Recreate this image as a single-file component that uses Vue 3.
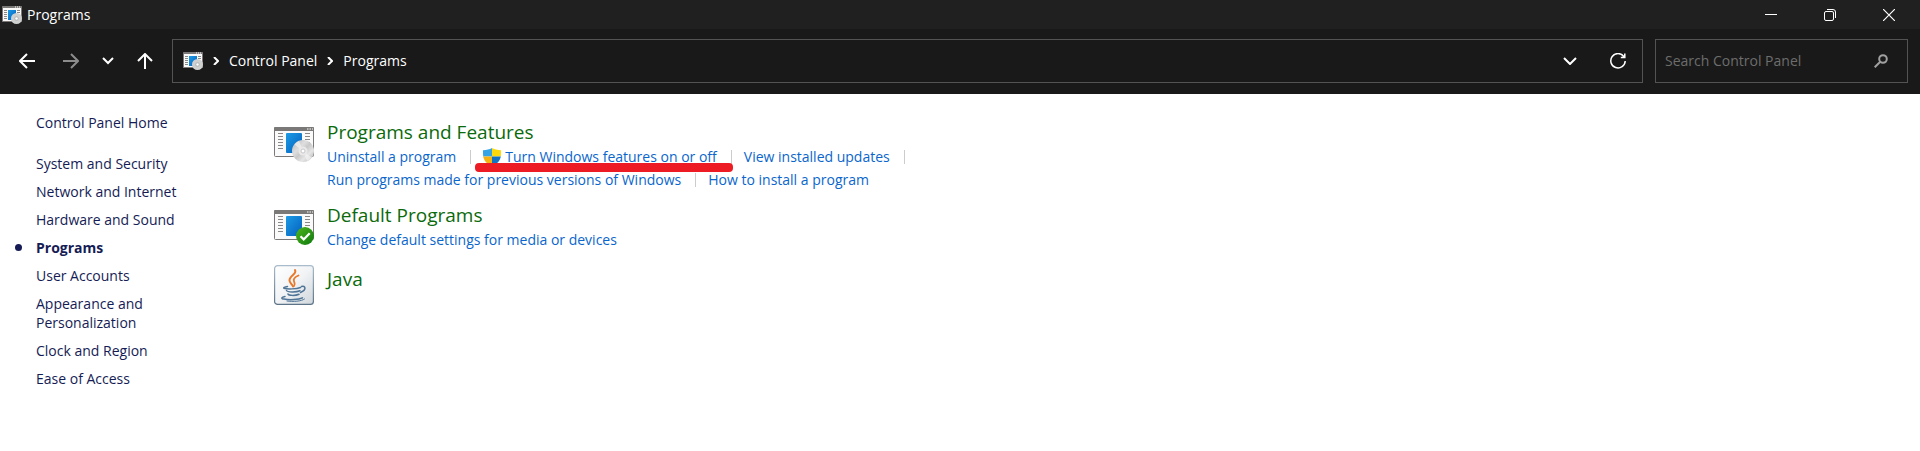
<script setup>
import { ref } from 'vue'

const search = ref('')

const categories = [
  'System and Security',
  'Network and Internet',
  'Hardware and Sound',
  'Programs',
  'User Accounts',
  'Appearance and Personalization',
  'Clock and Region',
  'Ease of Access'
]
const current = 'Programs'

const sections = [
  {
    title: 'Programs and Features',
    icon: 'icon-features',
    rows: [
      [
        { text: 'Uninstall a program', divider: true },
        { text: 'Turn Windows features on or off', shield: true, marked: true, divider: true },
        { text: 'View installed updates', divider: true }
      ],
      [
        { text: 'Run programs made for previous versions of Windows', divider: true },
        { text: 'How to install a program' }
      ]
    ]
  },
  {
    title: 'Default Programs',
    icon: 'icon-defaults',
    rows: [[{ text: 'Change default settings for media or devices' }]]
  },
  { title: 'Java', icon: 'icon-java', rows: [] }
]
</script>

<template>
  <div class="window">
    <svg class="sprite" aria-hidden="true">
      <defs>
        <linearGradient id="blue" x1="0" y1="0" x2="1" y2="1">
          <stop offset="0" stop-color="#1b9be6" />
          <stop offset="1" stop-color="#0560bd" />
        </linearGradient>
        <linearGradient id="disc" x1="0" y1="0" x2="1" y2="1">
          <stop offset="0" stop-color="#b9b9b9" />
          <stop offset="0.35" stop-color="#dedede" />
          <stop offset="0.5" stop-color="#c9c9c9" />
          <stop offset="0.7" stop-color="#e6e6e6" />
          <stop offset="1" stop-color="#a9a9a9" />
        </linearGradient>
        <linearGradient id="green" x1="0" y1="0" x2="1" y2="1">
          <stop offset="0" stop-color="#4fb51c" />
          <stop offset="1" stop-color="#0d7a0d" />
        </linearGradient>
        <linearGradient id="tile" x1="0" y1="0" x2="1" y2="1">
          <stop offset="0" stop-color="#ffffff" />
          <stop offset="0.5" stop-color="#f1f3f5" />
          <stop offset="1" stop-color="#cfd6db" />
        </linearGradient>
        <linearGradient id="tile-edge" x1="0" y1="0" x2="0" y2="1">
          <stop offset="0" stop-color="#a9bccb" />
          <stop offset="1" stop-color="#5d7488" />
        </linearGradient>
        <symbol id="page" viewBox="0 0 40 36">
          <rect x="0.5" y="0.5" width="39" height="29" rx="1" fill="#fafafa" stroke="#7b7977" />
          <path d="M0 1q0-1 1-1h38q1 0 1 1v3H0z" fill="#7b7977" />
          <path d="M33 2h1.500M35.500 2h1.500M38 2h1" stroke="#fff" stroke-width="1.200" />
          <path d="M4 6.500h5M4 9.500h5M4 12.500h5M4 15.500h5M4 18.500h5M4 21.500h5M31 6.500h5M31 9.500h5M31 12.500h5M31 15.500h5" stroke="#8a8886" />
          <rect x="12" y="6" width="16" height="20" rx="1" fill="url(#blue)" />
        </symbol>
        <symbol id="icon-features" viewBox="0 0 40 36">
          <use href="#page" width="40" height="36" />
          <circle cx="29" cy="24" r="11" fill="url(#disc)" />
          <path d="M29 24 20.500 17.500A11 11 0 0 1 25 14z" fill="#f2f2f2" opacity="0.700" />
          <path d="M29 24 37.500 30.500A11 11 0 0 1 33 34z" fill="#f4f4f4" opacity="0.700" />
          <circle cx="29" cy="24" r="4.500" fill="#e9e9e9" />
          <circle cx="29" cy="24" r="2" fill="#fff" stroke="#bdbdbd" stroke-width="0.800" />
        </symbol>
        <symbol id="icon-features-small" viewBox="0 0 20 18">
          <rect width="20" height="16" rx="0.500" fill="#7b7977" />
          <rect x="1" y="2" width="18" height="13" fill="#fafafa" />
          <path d="M13 1h1M15 1h1M17 1h1" stroke="#fff" />
          <path d="M2 4.500h3M2 6.500h3M2 8.500h3M2 10.500h3M2 12.500h3M15 4.500h3M15 6.500h3" stroke="#8a8886" />
          <rect x="6" y="4" width="8" height="10" fill="url(#blue)" />
          <circle cx="14.500" cy="12.500" r="5.500" fill="#cfd0d0" />
          <circle cx="14.500" cy="12.500" r="2.200" fill="#b4b6b6" />
          <circle cx="14.500" cy="12.500" r="1.200" fill="#fff" />
        </symbol>
        <symbol id="icon-defaults" viewBox="0 0 40 36">
          <use href="#page" width="40" height="36" />
          <circle cx="31" cy="26" r="9" fill="url(#green)" />
          <path d="m26.500 26.200 3.200 3.200 6-6.200" fill="none" stroke="#fff" stroke-width="2.200" />
        </symbol>
        <symbol id="icon-java" viewBox="0 0 40 40">
          <rect x="0.600" y="0.600" width="38.800" height="38.800" rx="3" fill="url(#tile)" stroke="url(#tile-edge)" stroke-width="1.200" />
          <g fill="none" stroke-linecap="round">
            <path d="M21 5c2.500 4-6 6-5.500 10.500.2 2.500 2.500 3.500 3.500 6" stroke="#e9782a" stroke-width="2" />
            <path d="M24.500 10.500c-3.500 1.500-5.500 3.500-4.500 6 .8 2 1.500 2.500 0 4.500" stroke="#e9782a" stroke-width="1.800" />
            <path d="M13.500 21.500c-3 .5-4.500 1.200-3.500 1.800 3 1 12.500.8 16.500-.8" stroke="#4f7496" stroke-width="1.500" />
            <path d="M12.500 25.500c1 1.800 9.500 2 13.500.3" stroke="#4f7496" stroke-width="1.500" />
            <path d="M14 29c.5 1.800 7.500 1.800 11 .2" stroke="#4f7496" stroke-width="1.500" />
            <path d="M27.500 21.500c4-1.300 5.500 3.500-1 6" stroke="#4f7496" stroke-width="1.500" />
            <path d="M11 31.500c-3.500.6-4.500 2-1 2.600 5.500 1 14.500.7 18.500-1.300" stroke="#4f7496" stroke-width="1.500" />
            <path d="M13 36c6 .9 14.500.4 17.500-2" stroke="#4f7496" stroke-width="1" />
          </g>
        </symbol>
      </defs>
    </svg>

    <header class="titlebar">
      <svg class="small-icon"><use href="#icon-features-small" /></svg>
      <span class="caption">Programs</span>
      <button class="window-button" aria-label="Minimize">
        <svg width="12" height="12"><path d="M0 5.500h12" stroke="#fff" /></svg>
      </button>
      <button class="window-button" aria-label="Restore">
        <svg width="12" height="12" fill="none" stroke="#fff">
          <rect x="0.500" y="2.500" width="9" height="9" rx="1.500" />
          <path d="M3 .5h6A2.500 2.500 0 0 1 11.500 3v6" />
        </svg>
      </button>
      <button class="window-button" aria-label="Close">
        <svg width="12" height="12"><path d="m0 0 12 12M12 0 0 12" stroke="#fff" stroke-width="1.200" /></svg>
      </button>
    </header>

    <nav class="toolbar">
      <div class="history">
        <button aria-label="Back" class="back">
          <svg width="16" height="16" class="line"><path d="M16 8H1M8 1 1 8l7 7" /></svg>
        </button>
        <button aria-label="Forward" class="disabled" disabled>
          <svg width="16" height="16" class="line"><path d="M0 8h15M8 1l7 7-7 7" /></svg>
        </button>
        <button aria-label="Recent locations">
          <svg width="12" height="16" class="line"><path d="m1 5 5 5 5-5" /></svg>
        </button>
        <button aria-label="Up">
          <svg width="16" height="16" class="line"><path d="M8 16V1M1 8l7-7 7 7" /></svg>
        </button>
      </div>
      <div class="address">
        <svg class="small-icon"><use href="#icon-features-small" /></svg>
        <svg class="separator line" width="6" height="8"><path d="m1 0 4 4-4 4" /></svg>
        <a href="#">Control Panel</a>
        <svg class="separator line" width="6" height="8"><path d="m1 0 4 4-4 4" /></svg>
        <a href="#">Programs</a>
        <div class="address-buttons">
          <button aria-label="Previous locations">
            <svg width="14" height="8" class="line"><path d="m1 1 6 6 6-6" /></svg>
          </button>
          <button aria-label="Refresh">
            <svg width="16" height="16" class="line thin">
              <path d="M13.800 3.500A7.200 7.200 0 1 0 15.200 8M14.800.5v4h-4" />
            </svg>
          </button>
        </div>
      </div>
      <label class="search">
        <input v-model="search" type="text" placeholder="Search Control Panel" aria-label="Search Control Panel" />
        <svg width="14" height="14" fill="none" stroke="#a0a0a0" stroke-width="2">
          <circle cx="9" cy="5" r="3.800" />
          <path d="M6 8 .7 13.300" />
        </svg>
      </label>
    </nav>

    <div class="content">
      <aside class="sidebar">
        <a class="home" href="#">Control Panel Home</a>
        <ul>
          <li v-for="item in categories" :key="item" :class="{ active: item === current }">
            <a href="#">{{ item }}</a>
          </li>
        </ul>
      </aside>

      <main>
        <section v-for="section in sections" :key="section.title" :class="{ single: !section.rows.length }">
          <svg class="section-icon"><use :href="'#' + section.icon" /></svg>
          <div>
            <h2><a href="#">{{ section.title }}</a></h2>
            <div v-for="(row, i) in section.rows" :key="i" class="tasks">
              <span
                v-for="task in row"
                :key="task.text"
                class="task"
                :class="{ divider: task.divider, marked: task.marked }"
              >
                <svg v-if="task.shield" width="18" height="18" viewBox="0 0 18 18">
                  <path d="M9 0v8.500H.2C0 6 0 4 0 2.200 3.500 2 6.500 1.500 9 0z" fill="#35a3e4" />
                  <path d="M9 0v8.500h8.800c.2-2.500.2-4.500.2-6.300C14.500 2 11.500 1.500 9 0z" fill="#fcd90c" />
                  <path d="M.2 8.500H9V18C4 16 1 13 .2 8.500z" fill="#f6b211" />
                  <path d="M17.800 8.500H9V18c5-2 8-5 8.800-9.500z" fill="#1272c4" />
                </svg>
                <a href="#">{{ task.text }}</a>
              </span>
            </div>
          </div>
        </section>
      </main>
    </div>
  </div>
</template>

<style>
body {
  margin: 0;
  background: #fff;
}
</style>

<style scoped>
.window {
  font-family: "Segoe UI", "Open Sans", "Noto Sans", sans-serif;
  font-size: 14px;
  line-height: 20px;
}

.sprite {
  position: absolute;
  width: 0;
  height: 0;
}

a {
  color: inherit;
  text-decoration: none;
}

a:hover {
  text-decoration: underline;
}

button {
  display: flex;
  align-items: center;
  justify-content: center;
  padding: 0;
  border: 0;
  background: none;
}

.line {
  fill: none;
  stroke: #fff;
  stroke-width: 2;
}

.thin {
  stroke-width: 1.5;
}

.small-icon {
  flex: none;
  width: 20px;
  height: 18px;
}

.titlebar {
  display: flex;
  align-items: center;
  height: 29px;
  padding: 0 2px;
  background: #202020;
  color: #fff;
}

.caption {
  flex: 1;
  margin-left: 5px;
}

.window-button {
  width: 59px;
  height: 29px;
}

.toolbar {
  display: flex;
  align-items: center;
  padding: 10px 12px 11px 16px;
  background: #191919;
  color: #fff;
}

.history {
  display: flex;
  align-items: center;
  gap: 17px;
  width: 156px;
}

.history button {
  height: 32px;
  padding: 0 3px;
}

.history .back {
  margin-right: 5px;
}

.history .disabled .line {
  stroke: #8c8c8c;
}

.address {
  display: flex;
  flex: 1;
  align-items: center;
  height: 42px;
  padding-left: 10px;
  border: 1px solid #535353;
}

.separator {
  margin: 0 10px;
}

.address-buttons {
  display: flex;
  margin-left: auto;
}

.address-buttons button {
  width: 48px;
  height: 42px;
}

.search {
  display: flex;
  align-items: center;
  box-sizing: border-box;
  width: 253px;
  height: 44px;
  margin-left: 12px;
  padding: 0 19px 0 9px;
  border: 1px solid #535353;
}

.search input {
  flex: 1;
  min-width: 0;
  padding: 0;
  border: 0;
  outline: 0;
  background: none;
  color: #fff;
  font: inherit;
}

.search input::placeholder {
  color: #6d6d6d;
}

.content {
  display: flex;
}

.sidebar {
  box-sizing: border-box;
  width: 274px;
  padding: 19px 90px 0 36px;
  color: #151c55;
  line-height: 19px;
}

.home {
  display: block;
  margin-bottom: 22px;
}

ul {
  margin: 0;
  padding: 0;
  list-style: none;
}

li {
  position: relative;
  margin-bottom: 9px;
}

.active {
  font-weight: bold;
}

.active::before {
  content: "";
  position: absolute;
  top: 6px;
  left: -21px;
  width: 7px;
  height: 7px;
  border-radius: 50%;
  background: #151c55;
}

main {
  flex: 1;
  padding-top: 26px;
}

section {
  display: flex;
  gap: 13px;
  margin-bottom: 12px;
}

.section-icon {
  flex: none;
  width: 40px;
  height: 36px;
  margin-top: 7px;
}

.single .section-icon {
  height: 40px;
  margin-top: 2px;
}

.single h2 {
  margin-top: 4px;
}

h2 {
  margin: 0;
  color: #0b6a0b;
  font-size: 19px;
  font-weight: normal;
  line-height: 25px;
}

.tasks {
  display: flex;
  color: #0a66cc;
  line-height: 23px;
}

.task {
  display: flex;
  position: relative;
  align-items: center;
  gap: 4px;
  margin-right: 12px;
}

.divider::after {
  content: "";
  width: 1px;
  height: 14px;
  margin-left: 10px;
  background: #ccc;
}

/* highlighter stroke under the task */
.marked::before {
  content: "";
  position: absolute;
  top: 18px;
  right: -1px;
  left: -8px;
  height: 9px;
  border-radius: 4px;
  background: #ed1c24;
}
</style>
